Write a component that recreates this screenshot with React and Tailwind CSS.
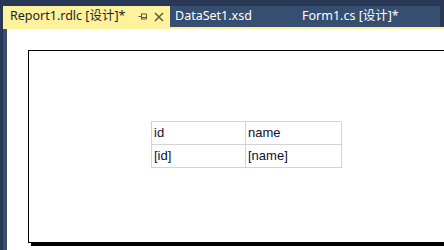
import React from 'react';

const uiFont = { fontFamily: '"Noto Sans", "Noto Sans CJK SC", sans-serif' };

function PinIcon() {
  return (
    <svg width="10" height="9" viewBox="0 0 10 9" className="block">
      <path d="M0.5 4.5H3.5M3.5 1.5V7.5M3.5 2H8.5V7H3.5M3.5 5.5H8.5" stroke="#5c5a3c" strokeWidth="1" fill="none" />
    </svg>
  );
}

function CloseIcon() {
  return (
    <svg width="10" height="10" viewBox="0 0 10 10" className="block">
      <path d="M1 1L9 9M9 1L1 9" stroke="#5c5a3c" strokeWidth="1.5" />
    </svg>
  );
}

export default function App() {
  return (
    <div className="w-[444px] h-[250px] overflow-hidden flex flex-col bg-[#293955]" style={uiFont}>
      <div className="h-[6px] bg-[#293955]" />
      <div className="h-[21px] flex bg-[#364e6f] pl-[3px] pr-[4px]">
        <div className="h-full w-[3px] -ml-[3px] bg-[#293955]" />
        <div className="h-full flex items-center bg-[#fff29d] pl-[7px] pr-[3px]">
          <span className="text-[12.5px] text-[#1e1e1e] w-[125px] whitespace-nowrap">Report1.rdlc [设计]*</span>
          <span className="w-[16px] flex justify-center"><PinIcon /></span>
          <span className="w-[16px] flex justify-center"><CloseIcon /></span>
        </div>
        <div className="h-full flex items-center pl-[5px] w-[132px]">
          <span className="text-[12.5px] text-white whitespace-nowrap">DataSet1.xsd</span>
        </div>
        <div className="h-full flex items-center">
          <span className="text-[12.5px] text-white whitespace-nowrap">Form1.cs [设计]*</span>
        </div>
        <div className="flex-1" />
        <div className="h-full w-[4px] -mr-[4px] bg-[#293955]" />
      </div>
      <div className="h-[2px] ml-[3px] bg-[#fff29d]" />
      <div className="flex-1 flex min-h-0">
        <div className="w-[7px] flex">
          <div className="w-[3px] bg-[#293955]" />
          <div className="w-[4px] bg-[#384d71]" />
        </div>
        <div className="flex-1 bg-white pl-[21px] pt-[21px]">
          <div className="w-[440px] h-[193px] border border-black shadow-[3px_3px_0_#000] bg-white pl-[122px] pt-[70px]" style={{ fontFamily: '"Liberation Sans", Arial, sans-serif' }}>
            <div className="grid grid-cols-[94px_96px] w-[190px] border-l border-t border-[#d3d3d3] text-[13px] text-[#101030]">
              <div className="h-[23px] border-r border-b border-[#d3d3d3] pl-[2px] flex items-center">id</div>
              <div className="h-[23px] border-r border-b border-[#d3d3d3] pl-[2px] flex items-center">name</div>
              <div className="h-[23px] border-r border-b border-[#d3d3d3] pl-[2px] flex items-center">[id]</div>
              <div className="h-[23px] border-r border-b border-[#d3d3d3] pl-[2px] flex items-center">[name]</div>
            </div>
          </div>
        </div>
      </div>
    </div>
  );
}
